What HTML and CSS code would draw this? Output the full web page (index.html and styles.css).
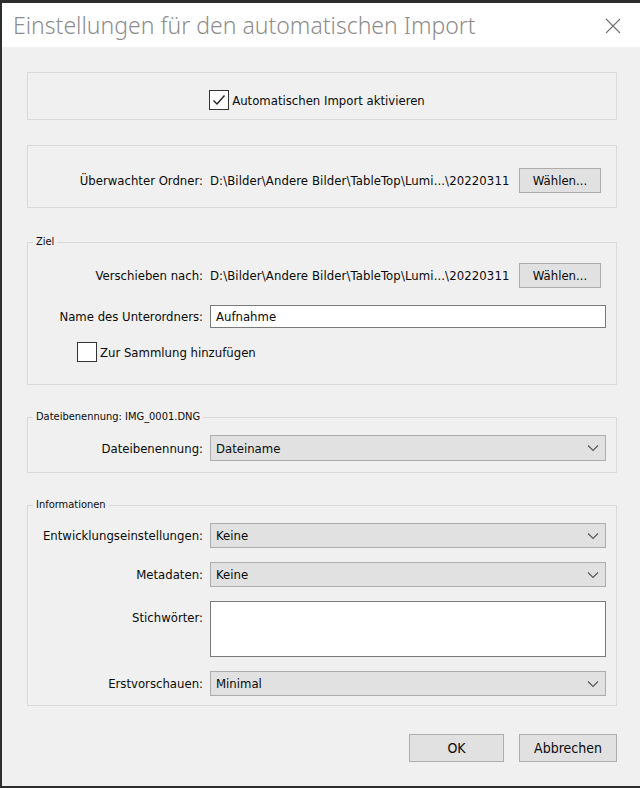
FILE: index.html
```html
<!DOCTYPE html>
<html lang="de">
<head>
  <meta charset="UTF-8">
  <title>Einstellungen für den automatischen Import</title>
  <link rel="stylesheet" href="styles.css">
</head>
<body>
  <div class="window">
    <div class="titlebar">
      <span class="title">Einstellungen für den automatischen Import</span>
      <svg class="close" width="16" height="16" viewBox="0 0 16 16">
        <path d="M1 1 L15 15 M15 1 L1 15" stroke="#707070" stroke-width="1.1" fill="none"/>
      </svg>
    </div>

    <div class="content">
      <!-- Aktivieren -->
      <div class="group group-enable">
        <label class="check">
          <span class="box">
            <svg width="18" height="18" viewBox="0 0 18 18">
              <path d="M3.5 9.5 L7 13 L14.5 4.5" stroke="#222" stroke-width="1.4" fill="none"/>
            </svg>
          </span>
          Automatischen Import aktivieren
        </label>
      </div>

      <!-- Überwachter Ordner -->
      <div class="group group-watch">
        <div class="row">
          <span class="label">Überwachter Ordner:</span>
          <span class="path">D:\Bilder\Andere Bilder\TableTop\Lumi...\20220311</span>
          <button class="btn btn-pick">Wählen...</button>
        </div>
      </div>

      <!-- Ziel -->
      <fieldset class="group group-target">
        <legend>Ziel</legend>
        <div class="row">
          <span class="label">Verschieben nach:</span>
          <span class="path">D:\Bilder\Andere Bilder\TableTop\Lumi...\20220311</span>
          <button class="btn btn-pick">Wählen...</button>
        </div>
        <div class="row row-input">
          <span class="label">Name des Unterordners:</span>
          <div class="input">Aufnahme</div>
        </div>
        <label class="check check-collection">
          <span class="box"></span>
          Zur Sammlung hinzufügen
        </label>
      </fieldset>

      <!-- Dateibenennung -->
      <fieldset class="group group-naming">
        <legend>Dateibenennung: IMG_0001.DNG</legend>
        <div class="row">
          <span class="label">Dateibenennung:</span>
          <div class="select">Dateiname
            <svg class="chev" width="12" height="8" viewBox="0 0 12 8"><path d="M1 1.5 L6 6.5 L11 1.5" stroke="#555" stroke-width="1.1" fill="none"/></svg>
          </div>
        </div>
      </fieldset>

      <!-- Informationen -->
      <fieldset class="group group-info">
        <legend>Informationen</legend>
        <div class="row">
          <span class="label">Entwicklungseinstellungen:</span>
          <div class="select">Keine
            <svg class="chev" width="12" height="8" viewBox="0 0 12 8"><path d="M1 1.5 L6 6.5 L11 1.5" stroke="#555" stroke-width="1.1" fill="none"/></svg>
          </div>
        </div>
        <div class="row">
          <span class="label">Metadaten:</span>
          <div class="select">Keine
            <svg class="chev" width="12" height="8" viewBox="0 0 12 8"><path d="M1 1.5 L6 6.5 L11 1.5" stroke="#555" stroke-width="1.1" fill="none"/></svg>
          </div>
        </div>
        <div class="row row-top">
          <span class="label">Stichwörter:</span>
          <div class="textarea"></div>
        </div>
        <div class="row">
          <span class="label">Erstvorschauen:</span>
          <div class="select">Minimal
            <svg class="chev" width="12" height="8" viewBox="0 0 12 8"><path d="M1 1.5 L6 6.5 L11 1.5" stroke="#555" stroke-width="1.1" fill="none"/></svg>
          </div>
        </div>
      </fieldset>

      <div class="actions">
        <button class="btn btn-ok">OK</button>
        <button class="btn btn-cancel">Abbrechen</button>
      </div>
    </div>
  </div>
</body>
</html>
```

FILE: styles.css
```css
* {
  box-sizing: border-box;
}

body {
  margin: 0;
  padding: 0;
  background: #2e2e2e;
  font-family: 'DejaVu Sans', 'Liberation Sans', sans-serif;
  font-stretch: condensed;
  font-size: 13px;
  color: #0a0a0a;
  overflow: hidden;
}

.window {
  margin: 3px 0 0 2px;
  width: 638px;
  height: 783px;
  background: #f0f0f0;
}

.titlebar {
  height: 44px;
  background: #fff;
  display: flex;
  align-items: center;
  justify-content: space-between;
  padding: 0 19px 0 11px;
}

.title {
  font-family: 'Noto Sans', 'Open Sans', sans-serif;
  font-stretch: normal;
  font-weight: 300;
  font-size: 23px;
  color: #8d8d8d;
}

.close {
  margin-top: 2px;
}

.content {
  padding: 25px 23px 0 25px;
}

.group {
  border: 1px solid #dadada;
  margin: 0 0 25px 0;
  padding: 0;
  min-width: 0;
}

fieldset.group legend {
  font-size: 11px;
  line-height: 14px;
  margin-left: 5px;
  padding: 0 3px;
}

.row {
  display: flex;
  align-items: center;
  padding-right: 10px;
}

.row-top {
  align-items: flex-start;
}

.label {
  width: 182px;
  flex: none;
  text-align: right;
  padding-right: 7px;
  white-space: nowrap;
}

.row-top .label {
  padding-top: 9px;
}

.path {
  flex: 1;
  white-space: nowrap;
  letter-spacing: 0.1px;
}

.check {
  display: flex;
  align-items: center;
  gap: 3px;
}

.box {
  width: 20px;
  height: 20px;
  border: 1px solid #333;
  background: #fff;
  display: flex;
  align-items: center;
  justify-content: center;
}

.btn {
  font: inherit;
  color: #0a0a0a;
  background: #e1e1e1;
  border: 1px solid #adadad;
  padding: 0;
}

.btn-pick {
  width: 82px;
  height: 25px;
  margin-left: 8px;
  margin-right: 5px;
  flex: none;
}

.input,
.select,
.textarea {
  flex: 1;
  height: 24px;
  padding: 0 5px;
  display: flex;
  align-items: center;
}

.input {
  background: #fff;
  border: 1px solid #7a7a7a;
  height: 23px;
}

.textarea {
  background: #fff;
  border: 1px solid #7a7a7a;
  height: 56px;
}

.select {
  background: #e1e1e1;
  border: 1px solid #adadad;
  height: 26px;
  justify-content: space-between;
  padding-right: 6px;
}

/* Aktivieren */
.group-enable {
  height: 48px;
  padding: 17px 10px 0 0;
  display: flex;
  justify-content: center;
  align-items: flex-start;
}

/* Überwachter Ordner */
.group-watch {
  height: 63px;
  padding-top: 22px;
  margin-bottom: 27px;
}

/* Ziel */
.group-target {
  height: 150px;
}

.group-target .row:first-of-type {
  margin-top: 14px;
}

.group-target .row-input {
  margin-top: 17px;
}

.check-collection {
  margin: 14px 0 0 49px;
}

/* Dateibenennung */
.group-naming {
  height: 63px;
}

.group-naming .row {
  margin-top: 11px;
}

/* Informationen */
.group-info {
  height: 208px;
}

.group-info .row {
  margin-bottom: 14px;
}

.group-info .row:first-of-type {
  margin-top: 11px;
}

.group-info .select {
  height: 25px;
}

.actions {
  display: flex;
  justify-content: flex-end;
  gap: 15px;
  margin-top: 28px;
}

.btn-ok {
  width: 95px;
  height: 28px;
  font-size: 14px;
}

.btn-cancel {
  width: 98px;
  height: 28px;
  font-size: 14px;
}
```
